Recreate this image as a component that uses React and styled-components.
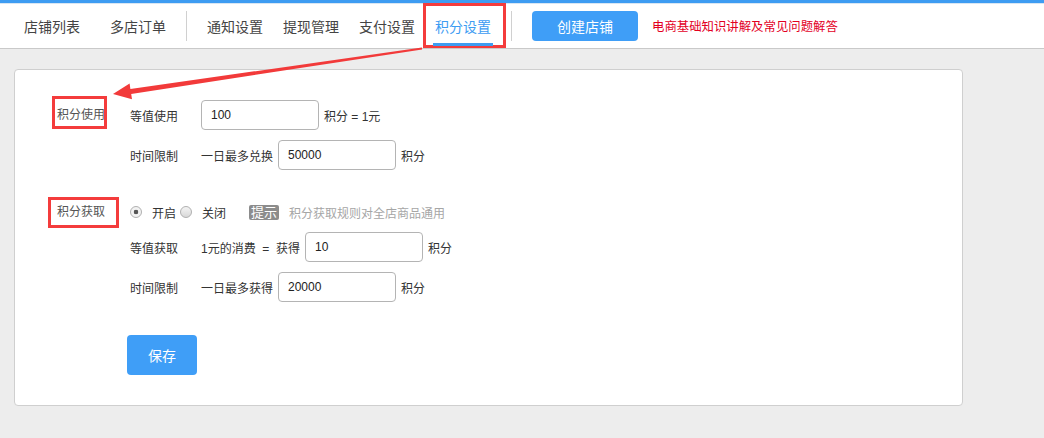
import styled, { createGlobalStyle } from "styled-components"

const GlobalStyle = createGlobalStyle`
  body {
    margin: 0;
    background: #ededed;
    font-family: "Liberation Sans", "Noto Sans CJK SC", sans-serif;
    color: #333;
  }
`

export default function App() {
  return (
    <Page>
      <GlobalStyle />
      <Nav>
        <NavGroup $gap={10}>
          <NavItem>店铺列表</NavItem>
          <NavItem>多店订单</NavItem>
        </NavGroup>
        <Divider />
        <NavGroup $gap={0}>
          <NavItem>通知设置</NavItem>
          <NavItem>提现管理</NavItem>
          <NavItem>支付设置</NavItem>
          <NavItem $active>
            积分设置
            <Mark $top={0} $right={-5} $bottom={0} $left={-2} />
          </NavItem>
        </NavGroup>
        <Divider />
        <CreateButton>创建店铺</CreateButton>
        <HelpLink>电商基础知识讲解及常见问题解答</HelpLink>
      </Nav>

      <Panel>
        <Section>
          <SectionLabel $lh={30}>
            <LabelText>
              积分使用
              <Mark $top={-4} $right={-2} $bottom={1} $left={-5} />
            </LabelText>
          </SectionLabel>
          <Rows>
            <Row>
              <SubLabel>等值使用</SubLabel>
              <Input defaultValue="100" />
              <Text>积分 = 1元</Text>
            </Row>
            <Row>
              <SubLabel>时间限制</SubLabel>
              <Text>一日最多兑换</Text>
              <Input defaultValue="50000" />
              <Text>积分</Text>
            </Row>
          </Rows>
        </Section>

        <Section>
          <SectionLabel $lh={20}>
            <LabelText>
              积分获取
              <Mark $top={-5} $right={-14} $bottom={-6} $left={-9} />
            </LabelText>
          </SectionLabel>
          <Rows>
            <Row $short>
              <Radio $checked />
              <RadioText>开启</RadioText>
              <Radio />
              <RadioText>关闭</RadioText>
              <Badge>提示</Badge>
              <Hint>积分获取规则对全店商品通用</Hint>
            </Row>
            <Row>
              <SubLabel>等值获取</SubLabel>
              <Text>1元的消费 &nbsp;= &nbsp;获得</Text>
              <Input defaultValue="10" />
              <Text>积分</Text>
            </Row>
            <Row>
              <SubLabel>时间限制</SubLabel>
              <Text>一日最多获得</Text>
              <Input defaultValue="20000" />
              <Text>积分</Text>
            </Row>
            <Actions>
              <SaveButton>保存</SaveButton>
            </Actions>
          </Rows>
        </Section>
      </Panel>

      <Arrow width="1044" height="438" viewBox="0 0 1044 438">
        <polygon
          points="421.9,47.6 422.1,49.4 131.2,93.9 132,99.3 113,94 129.6,83.5 130.4,88.9"
          fill="#f23a3a"
        />
      </Arrow>
    </Page>
  )
}

const Page = styled.div`
  position: relative;
  min-height: 438px;
  overflow: hidden;
`

const Nav = styled.div`
  display: flex;
  align-items: center;
  height: 45px;
  padding-left: 14px;
  background: #fff;
  border-top: 3px solid #3d9cf2;
  border-bottom: 1px solid #c9c9c9;
  box-shadow: inset 0 1px 0 #d8e6f3;
`

const NavGroup = styled.div`
  display: flex;
  height: 100%;
  gap: ${(p) => p.$gap}px;
`

const NavItem = styled.div`
  position: relative;
  display: flex;
  align-items: center;
  padding: 0 10px;
  font-size: 14px;
  color: ${(p) => (p.$active ? "#3d9cf2" : "#444")};

  &::after {
    content: "";
    display: ${(p) => (p.$active ? "block" : "none")};
    position: absolute;
    left: 8px;
    right: 8px;
    bottom: 2px;
    height: 3px;
    background: #3d9cf2;
  }
`

const Divider = styled.div`
  width: 1px;
  height: 30px;
  margin: 0 10px;
  background: #d0d0d0;
`

const CreateButton = styled.button`
  width: 106px;
  height: 30px;
  margin-left: 10px;
  border: none;
  border-radius: 4px;
  background: #3f9ef7;
  color: #fff;
  font-family: inherit;
  font-size: 14px;
`

const HelpLink = styled.span`
  margin-left: 14px;
  font-size: 12.4px;
  color: #e3001f;
`

const Mark = styled.span`
  position: absolute;
  top: ${(p) => p.$top}px;
  right: ${(p) => p.$right}px;
  bottom: ${(p) => p.$bottom}px;
  left: ${(p) => p.$left}px;
  border: 3px solid #f43c3c;
  pointer-events: none;
`

const Panel = styled.div`
  box-sizing: border-box;
  width: 949px;
  margin: 20px 0 0 14px;
  padding: 30px 0 30px 42px;
  background: #fff;
  border: 1px solid #cfcfcf;
  border-radius: 4px;
  display: flex;
  flex-direction: column;
  gap: 32px;
`

const Section = styled.div`
  display: flex;
`

const SectionLabel = styled.div`
  width: 73px;
  flex-shrink: 0;
  align-self: flex-start;
  line-height: ${(p) => p.$lh}px;
  font-size: 12px;
  color: #555;
`

const LabelText = styled.span`
  position: relative;
  display: inline-block;
`

const Rows = styled.div`
  display: flex;
  flex-direction: column;
  gap: 10px;
`

const Row = styled.div`
  display: flex;
  align-items: center;
  height: ${(p) => (p.$short ? 20 : 30)}px;
  gap: 5px;
  font-size: 12px;
`

const SubLabel = styled.span`
  width: 66px;
  color: #333;
`

const Text = styled.span`
  color: #333;
  white-space: pre;
`

const Input = styled.input`
  box-sizing: border-box;
  width: 118px;
  height: 30px;
  padding: 0 9px;
  border: 1px solid #b4b4b4;
  border-radius: 4px;
  font-family: "Liberation Sans", sans-serif;
  font-size: 12px;
  color: #222;
  outline: none;
`

const Radio = styled.span`
  box-sizing: border-box;
  width: 12px;
  height: 12px;
  border-radius: 50%;
  border: 1px solid #b0b0b0;
  background: ${(p) =>
    p.$checked
      ? "radial-gradient(circle, #555 0 2px, #f2f2f2 2.6px)"
      : "linear-gradient(#f4f4f4, #d8d8d8)"};
`

const RadioText = styled.span`
  margin: 0 -1px 0 5px;
  color: #333;
`

const Badge = styled.span`
  margin-left: 19px;
  padding: 0 2px;
  height: 15px;
  line-height: 15px;
  border-radius: 2px;
  background: #8c8c8c;
  color: #fff;
  font-size: 13px;
`

const Hint = styled.span`
  margin-left: 5px;
  color: #a6a6a6;
`

const Actions = styled.div`
  margin-top: 23px;
`

const SaveButton = styled.button`
  width: 70px;
  height: 40px;
  margin-left: -3px;
  border: none;
  border-radius: 4px;
  background: #3f9ef7;
  color: #fff;
  font-family: inherit;
  font-size: 14px;
`

const Arrow = styled.svg`
  position: absolute;
  top: 0;
  left: 0;
  pointer-events: none;
`
